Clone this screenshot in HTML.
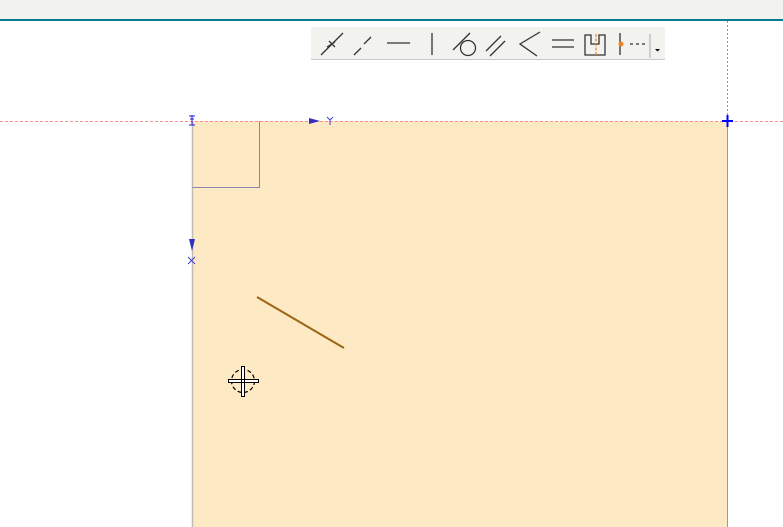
<!DOCTYPE html>
<html><head><style>
html,body{margin:0;padding:0;width:783px;height:527px;overflow:hidden;background:#fff;font-family:"Liberation Sans",sans-serif}
</style></head><body>
<svg width="783" height="527" xmlns="http://www.w3.org/2000/svg" style="position:absolute;left:0;top:0">
<rect x="0" y="0" width="783" height="19" fill="#f2f2ee"/>
<rect x="0" y="19" width="783" height="2" fill="#0a7a92"/>
<line x1="727.5" y1="21" x2="727.5" y2="121" stroke="#7aa87a" stroke-dasharray="2,2"/>
<rect x="192" y="121" width="535" height="406" fill="#fde9c4"/>
<line x1="192.5" y1="121" x2="192.5" y2="527" stroke="#c0bdb5" stroke-width="1.5"/>
<line x1="727.5" y1="121" x2="727.5" y2="527" stroke="#9a9a90"/>
<line x1="0" y1="121.5" x2="783" y2="121.5" stroke="#f59090" stroke-dasharray="3,2"/>
<polyline points="192.5,187.5 259.5,187.5 259.5,121" fill="none" stroke="#8a88a8"/>
<path d="M189 116h6M189 125h6M192 115v10M190 119h4" stroke="#2020e0" fill="none"/>
<path d="M309 118l11 3l-11 3z" fill="#3030c0"/>
<path d="M327 117l3 3l3-3M330 120v5" stroke="#4040d0" fill="none"/>
<path d="M189 239l3 12l3-12z" fill="#3030c0"/>
<path d="M188 257l7 7M195 257l-7 7" stroke="#4040d0"/>
<path d="M722 121h11M727.5 115v12" stroke="#0000ff" stroke-width="2"/>
<line x1="257" y1="297" x2="344" y2="348" stroke="#9c6414" stroke-width="2"/>
<circle cx="243" cy="381" r="11.5" fill="none" stroke="#000" stroke-width="1.2" stroke-dasharray="4,2.5"/>
<path d="M228.5 379.5h30v3h-30z M241.5 366.5h3v30h-3z" fill="#fff" stroke="#000"/>
<rect x="311" y="27" width="354" height="33" fill="#f2f2ee"/>
<line x1="311" y1="59.5" x2="665" y2="59.5" stroke="#c8c8cc"/>
<g stroke="#333" stroke-width="1.3" fill="none">
<path d="M321 55l22-22M329 41l6 6M327 47l8-5"/>
<path d="M354 55l7-7M364 44l7-7"/>
<path d="M387 43h23"/>
<path d="M432 33v22"/>
<path d="M453 50l17-17"/><circle cx="468" cy="48" r="7.5"/>
<path d="M486 51l15-15M490 56l15-15"/>
<path d="M540 32L520 44L537 56"/>
<path d="M552 40h22M552 47h22"/>
<path d="M585 35h6v9h8v-9h6v20h-20z"/>
<path d="M620 33v22M630 44h3M636 44h3M642 44h3"/>
<path d="M650 34v24" stroke="#bbb"/>
</g>
<path d="M596 34v22" stroke="#f08020" stroke-width="1.2" stroke-dasharray="3,1.5"/>
<circle cx="621" cy="44" r="2.5" fill="#f08020"/>
<path d="M655 49h5l-2.5 2.5z" fill="#000"/>
</svg>
</body></html>
